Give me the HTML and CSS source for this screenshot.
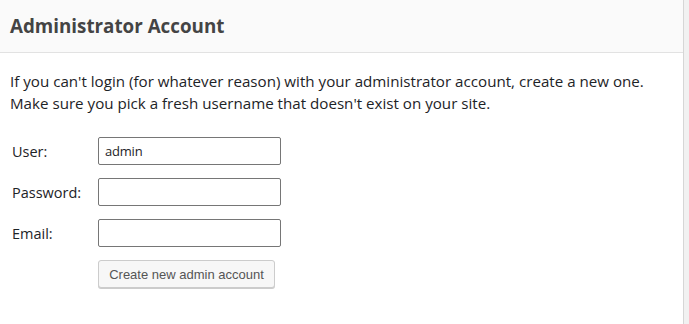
FILE: index.html
```html
<!DOCTYPE html>
<html>
<head>
<meta charset="utf-8">
<link rel="stylesheet" href="styles.css">
</head>
<body>
<div class="card">
  <div class="card-header"><h2 class="title">Administrator Account</h2></div>
  <div class="card-body">
    <p class="intro">If you can't login (for whatever reason) with your administrator account, create a new one.<br>Make sure you pick a fresh username that doesn't exist on your site.</p>
    <form class="form">
      <label class="label" for="u">User:</label>
      <input class="field" id="u" type="text" value="admin">
      <label class="label" for="p">Password:</label>
      <input class="field" id="p" type="password">
      <label class="label" for="e">Email:</label>
      <input class="field" id="e" type="text">
      <span></span>
      <button class="button" type="button">Create new admin account</button>
    </form>
  </div>
</div>
</body>
</html>
```
FILE: styles.css
```css
html, body {
  margin: 0;
  padding: 0;
  background: #f1f1f1;
  height: 100%;
}
.card {
  width: 683px;
  height: 100%;
  background: #fff;
  border-right: 1px solid #d6d6d6;
  font-family: "Open Sans", "Noto Sans", sans-serif;
}
.card-header {
  background: #fafafa;
  border-bottom: 1px solid #e2e2e2;
  height: 52px;
  display: flex;
  align-items: center;
  padding: 0 10px;
}
.title {
  margin: 0;
  font-size: 18.8px;
  font-weight: 700;
  color: #444;
}
.card-body {
  padding: 17px 10px 0;
}
.intro {
  margin: 0 0 23px;
  font-size: 15.15px;
  line-height: 22px;
  color: #1d2327;
}
.form {
  display: grid;
  grid-template-columns: 86px 183px;
  row-gap: 13px;
  align-items: center;
  padding-left: 2px;
}
.label {
  font-size: 14.5px;
  color: #1d2327;
}
.field {
  box-sizing: border-box;
  height: 28px;
  width: 183px;
  margin: 0;
  border: 1px solid #767676;
  border-radius: 2px;
  padding: 0 6px;
  font-family: "Open Sans", "Noto Sans", sans-serif;
  font-size: 13px;
  color: #1d2327;
  letter-spacing: -0.2px;
  background: #fff;
}
.button {
  justify-self: start;
  box-sizing: border-box;
  height: 28px;
  width: 177px;
  padding: 0 10px;
  border: 1px solid #ccc;
  border-radius: 3px;
  background: #f7f7f7;
  box-shadow: 0 1px 0 #ccc;
  color: #555;
  font-family: "Liberation Sans", Arial, sans-serif;
  font-size: 13px;
}
```
